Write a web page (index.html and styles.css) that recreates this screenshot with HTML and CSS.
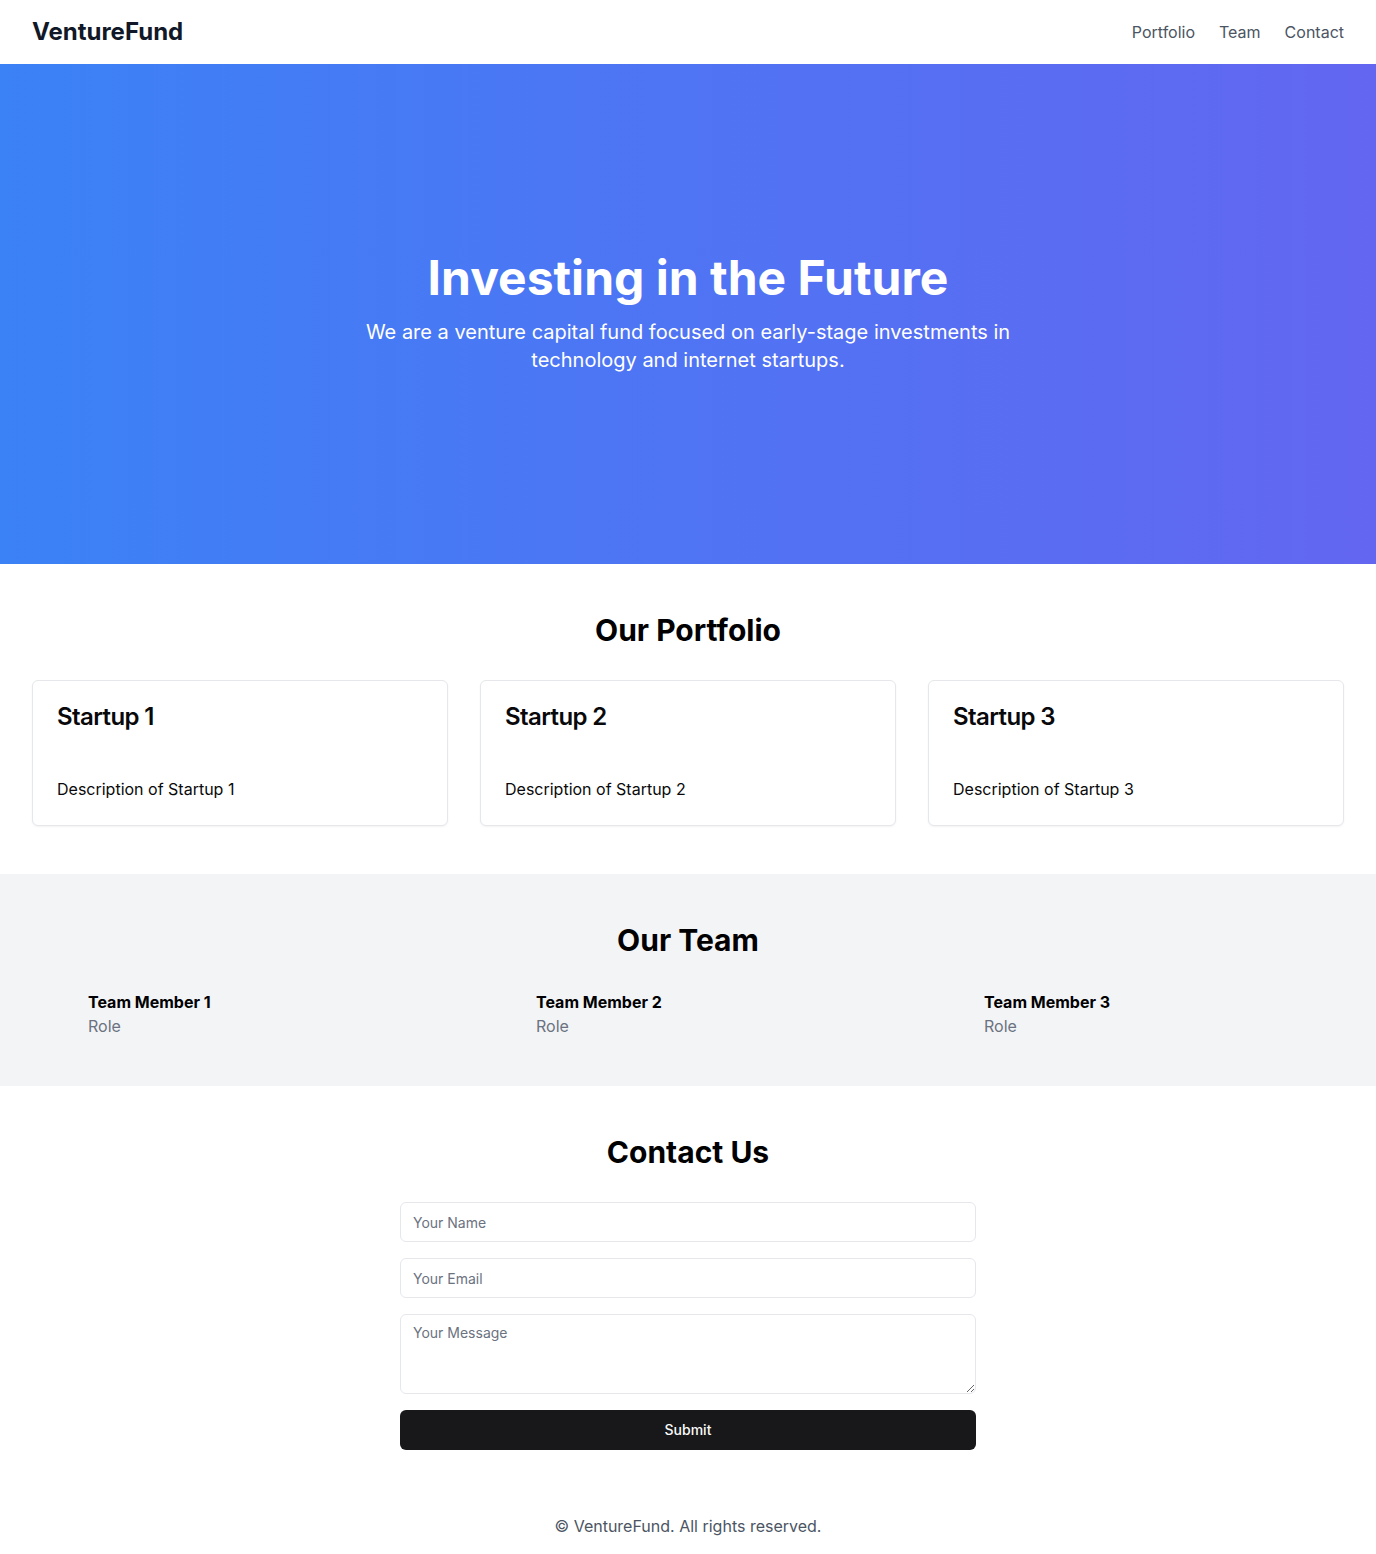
FILE: index.html
```html
<!DOCTYPE html>
<html lang="en">
<head>
<meta charset="utf-8">
<title>VentureFund</title>
<link rel="stylesheet" href="styles.css">
</head>
<body>
<header class="site-header">
  <div class="logo">VentureFund</div>
  <nav class="nav">
    <a href="#portfolio">Portfolio</a>
    <a href="#team">Team</a>
    <a href="#contact">Contact</a>
  </nav>
</header>

<section class="hero">
  <h1 class="hero-title">Investing in the Future</h1>
  <p class="hero-sub">We are a venture capital fund focused on early-stage investments in technology and internet startups.</p>
</section>

<section class="section" id="portfolio">
  <h2 class="section-title">Our Portfolio</h2>
  <div class="grid">
    <div class="card">
      <h3 class="card-title">Startup 1</h3>
      <p class="card-desc">Description of Startup 1</p>
    </div>
    <div class="card">
      <h3 class="card-title">Startup 2</h3>
      <p class="card-desc">Description of Startup 2</p>
    </div>
    <div class="card">
      <h3 class="card-title">Startup 3</h3>
      <p class="card-desc">Description of Startup 3</p>
    </div>
  </div>
</section>

<section class="section section-gray" id="team">
  <h2 class="section-title">Our Team</h2>
  <div class="grid">
    <div class="member">
      <div class="member-name">Team Member 1</div>
      <div class="member-role">Role</div>
    </div>
    <div class="member">
      <div class="member-name">Team Member 2</div>
      <div class="member-role">Role</div>
    </div>
    <div class="member">
      <div class="member-name">Team Member 3</div>
      <div class="member-role">Role</div>
    </div>
  </div>
</section>

<section class="section" id="contact">
  <h2 class="section-title">Contact Us</h2>
  <form class="form">
    <input class="field" type="text" placeholder="Your Name">
    <input class="field" type="email" placeholder="Your Email">
    <textarea class="field field-area" placeholder="Your Message"></textarea>
    <button class="submit" type="button">Submit</button>
  </form>
</section>

<footer class="footer">© VentureFund. All rights reserved.</footer>
</body>
</html>
```

FILE: styles.css
```css
* { box-sizing: border-box; }
html, body { margin: 0; padding: 0; }
body {
  font-family: Inter, "Noto Sans", sans-serif;
  color: #111827;
  background: #fff;
}

.site-header {
  height: 64px;
  padding: 0 32px;
  display: flex;
  align-items: center;
  justify-content: space-between;
  background: #fff;
}
.logo {
  font-size: 24px;
  line-height: 32px;
  font-weight: 700;
  color: #111827;
}
.nav { display: flex; gap: 24px; }
.nav a {
  font-size: 16px;
  line-height: 24px;
  color: #4b5563;
  text-decoration: none;
}

.hero {
  height: 500px;
  background: linear-gradient(to right, #3b82f6, #6366f1);
  display: flex;
  flex-direction: column;
  align-items: center;
  justify-content: center;
  color: #fff;
  text-align: center;
}
.hero-title {
  margin: 0 0 16px;
  font-size: 48px;
  line-height: 48px;
  font-weight: 700;
}
.hero-sub {
  margin: 0;
  max-width: 672px;
  font-size: 20px;
  line-height: 28px;
}

.section { padding: 48px 32px; }
.section-gray { background: #f3f4f6; }
.section-title {
  margin: 0 0 32px;
  text-align: center;
  font-size: 30px;
  line-height: 36px;
  font-weight: 700;
  color: #000;
}
.grid {
  display: grid;
  grid-template-columns: repeat(3, 1fr);
  gap: 32px;
}
.card {
  border: 1px solid #e5e7eb;
  border-radius: 6px;
  box-shadow: 0 1px 2px rgba(0,0,0,0.05);
  padding: 24px;
  background: #fff;
}
.card-title {
  margin: 0 0 48px;
  font-size: 24px;
  line-height: 24px;
  font-weight: 600;
  letter-spacing: -0.6px;
  color: #09090b;
}
.card-desc {
  margin: 0;
  font-size: 16px;
  line-height: 24px;
  color: #09090b;
}

.member { padding-left: 56px; }
.member-name {
  font-size: 16px;
  line-height: 24px;
  font-weight: 700;
  color: #000;
}
.member-role {
  font-size: 16px;
  line-height: 24px;
  color: #6b7280;
}

.form {
  max-width: 576px;
  margin: 0 auto;
  display: flex;
  flex-direction: column;
  gap: 16px;
}
.field {
  display: block;
  width: 100%;
  height: 40px;
  padding: 8px 12px;
  border: 1px solid #e5e7eb;
  border-radius: 6px;
  font-family: Inter, "Noto Sans", sans-serif;
  font-size: 14px;
  line-height: 20px;
  color: #111827;
  background: #fff;
  outline: none;
}
.field::placeholder { color: #6b7280; }
.field-area { height: 80px; resize: vertical; }
.submit {
  height: 40px;
  padding: 8px 16px;
  border: 0;
  border-radius: 6px;
  background: #18181b;
  color: #fafafa;
  font-family: Inter, "Noto Sans", sans-serif;
  font-size: 14px;
  line-height: 20px;
  font-weight: 500;
}

.footer {
  padding: 16px 0;
  text-align: center;
  font-size: 16px;
  line-height: 24px;
  color: #4b5563;
}
```
